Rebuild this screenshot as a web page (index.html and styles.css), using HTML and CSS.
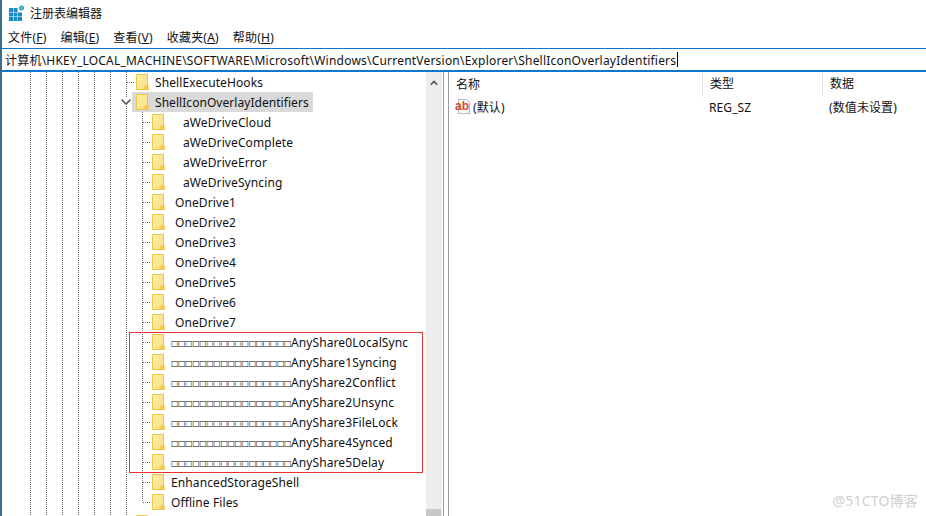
FILE: index.html
```html
<!DOCTYPE html>
<html lang="zh-CN">
<head>
    <meta charset="UTF-8">
    <title>注册表编辑器</title>
    <link rel="stylesheet" href="styles.css">
</head>
<body>

<svg class="defs" width="0" height="0">
    <defs>
        <linearGradient id="folderFill" x1="0" y1="0" x2="1" y2="1">
            <stop offset="0" stop-color="#fff0b0"/>
            <stop offset="1" stop-color="#fbdc7c"/>
        </linearGradient>
        <symbol id="folder" viewBox="0 0 13 16">
            <path d="M.5.5h11v11.5h-2.500v3.500H.5z" fill="url(#folderFill)" stroke="#ebc547"/>
            <path d="M9.500 12.500h3v3h-3z" fill="#f6d565" stroke="#ebc547"/>
        </symbol>
    </defs>
</svg>

<div class="window">
    <header class="titlebar">
        <svg class="appicon" width="16" height="16" viewBox="0 0 16 16">
            <path d="M0 3h4v4H0zM4.500 3h4v4h-4zM0 7.500h4v4H0zM4.500 7.500h4v4h-4zM9 7.500h4v4H9zM0 12h4v4H0zM4.500 12h4v4h-4zM9 12h4v4H9z" fill="#1b8cc8"/>
            <circle cx="12.500" cy="3" r="2.500" fill="#2f9fd4"/>
            <circle cx="12.500" cy="3" r="0.800" fill="#bfe3f4"/>
        </svg>
        <span>注册表编辑器</span>
    </header>

    <nav class="menubar">
        <span>文件(<u>F</u>)</span>
        <span>编辑(<u>E</u>)</span>
        <span>查看(<u>V</u>)</span>
        <span>收藏夹(<u>A</u>)</span>
        <span>帮助(<u>H</u>)</span>
    </nav>

    <div class="address"><span>计算机\HKEY_LOCAL_MACHINE\SOFTWARE\Microsoft\Windows\CurrentVersion\Explorer\ShellIconOverlayIdentifiers</span><i class="caret"></i></div>

    <main class="panes">
        <section class="tree">
            <div class="row level1">
                <i class="stub"></i>
                <div class="node"><svg class="folder"><use href="#folder"/></svg><span class="label">ShellExecuteHooks</span></div>
            </div>
            <div class="row open">
                <svg class="chevron" width="12" height="8" viewBox="0 0 12 8"><path d="M1.500 1.500 6 6l4.500-4.500" fill="none" stroke="#555" stroke-width="1.600"/></svg>
                <div class="node selected"><svg class="folder"><use href="#folder"/></svg><span class="label">ShellIconOverlayIdentifiers</span></div>
            </div>

            <div class="subkeys">
                <div class="row level2"><i class="stub"></i><div class="node"><svg class="folder"><use href="#folder"/></svg><span class="label wide">aWeDriveCloud</span></div></div>
                <div class="row level2"><i class="stub"></i><div class="node"><svg class="folder"><use href="#folder"/></svg><span class="label wide">aWeDriveComplete</span></div></div>
                <div class="row level2"><i class="stub"></i><div class="node"><svg class="folder"><use href="#folder"/></svg><span class="label wide">aWeDriveError</span></div></div>
                <div class="row level2"><i class="stub"></i><div class="node"><svg class="folder"><use href="#folder"/></svg><span class="label wide">aWeDriveSyncing</span></div></div>
                <div class="row level2"><i class="stub"></i><div class="node"><svg class="folder"><use href="#folder"/></svg><span class="label mid">OneDrive1</span></div></div>
                <div class="row level2"><i class="stub"></i><div class="node"><svg class="folder"><use href="#folder"/></svg><span class="label mid">OneDrive2</span></div></div>
                <div class="row level2"><i class="stub"></i><div class="node"><svg class="folder"><use href="#folder"/></svg><span class="label mid">OneDrive3</span></div></div>
                <div class="row level2"><i class="stub"></i><div class="node"><svg class="folder"><use href="#folder"/></svg><span class="label mid">OneDrive4</span></div></div>
                <div class="row level2"><i class="stub"></i><div class="node"><svg class="folder"><use href="#folder"/></svg><span class="label mid">OneDrive5</span></div></div>
                <div class="row level2"><i class="stub"></i><div class="node"><svg class="folder"><use href="#folder"/></svg><span class="label mid">OneDrive6</span></div></div>
                <div class="row level2"><i class="stub"></i><div class="node"><svg class="folder"><use href="#folder"/></svg><span class="label mid">OneDrive7</span></div></div>
                <div class="row level2"><i class="stub"></i><div class="node"><svg class="folder"><use href="#folder"/></svg><span class="label"><span class="tofu">□□□□□□□□□□□□□□□□□</span>AnyShare0LocalSync</span></div></div>
                <div class="row level2"><i class="stub"></i><div class="node"><svg class="folder"><use href="#folder"/></svg><span class="label"><span class="tofu">□□□□□□□□□□□□□□□□□</span>AnyShare1Syncing</span></div></div>
                <div class="row level2"><i class="stub"></i><div class="node"><svg class="folder"><use href="#folder"/></svg><span class="label"><span class="tofu">□□□□□□□□□□□□□□□□□</span>AnyShare2Conflict</span></div></div>
                <div class="row level2"><i class="stub"></i><div class="node"><svg class="folder"><use href="#folder"/></svg><span class="label"><span class="tofu">□□□□□□□□□□□□□□□□□</span>AnyShare2Unsync</span></div></div>
                <div class="row level2"><i class="stub"></i><div class="node"><svg class="folder"><use href="#folder"/></svg><span class="label"><span class="tofu">□□□□□□□□□□□□□□□□□</span>AnyShare3FileLock</span></div></div>
                <div class="row level2"><i class="stub"></i><div class="node"><svg class="folder"><use href="#folder"/></svg><span class="label"><span class="tofu">□□□□□□□□□□□□□□□□□</span>AnyShare4Synced</span></div></div>
                <div class="row level2"><i class="stub"></i><div class="node"><svg class="folder"><use href="#folder"/></svg><span class="label"><span class="tofu">□□□□□□□□□□□□□□□□□</span>AnyShare5Delay</span></div></div>
                <div class="row level2"><i class="stub"></i><div class="node"><svg class="folder"><use href="#folder"/></svg><span class="label">EnhancedStorageShell</span></div></div>
                <div class="row level2"><i class="stub"></i><div class="node"><svg class="folder"><use href="#folder"/></svg><span class="label">Offline Files</span></div></div>
            </div>

            <div class="row level1">
                <div class="node next"><svg class="folder"><use href="#folder"/></svg></div>
            </div>

            <div class="redbox"></div>
        </section>

        <div class="scrollbar">
            <svg width="8" height="6" viewBox="0 0 8 6"><path d="M.8 4.800 4 1.500l3.200 3.300" fill="none" stroke="#555" stroke-width="1.600"/></svg>
            <div class="thumb"></div>
        </div>

        <div class="splitter"></div>

        <section class="list">
            <div class="list-head">
                <div class="col col-name">名称</div>
                <div class="col col-type">类型</div>
                <div class="col col-data">数据</div>
            </div>
            <div class="list-row">
                <div class="col col-name">
                    <svg class="abicon" width="16" height="16" viewBox="0 0 16 16">
                        <path d="M3.500 .5h8l3 3v11.500l-3-1-3 1-3-1-2 1z" fill="#fff" stroke="#b5b5b5"/>
                        <text x="0" y="11" class="abtext">ab</text>
                    </svg>
                    <span>(默认)</span>
                </div>
                <div class="col col-type">REG_SZ</div>
                <div class="col col-data">(数值未设置)</div>
            </div>
        </section>
    </main>

    <div class="watermark">@51CTO博客</div>
</div>

</body>
</html>
```

FILE: styles.css
```css
html, body {
    margin: 0;
    height: 100%;
}
body {
    font-family: "Noto Sans", "Noto Sans CJK SC", sans-serif;
    font-size: 12px;
    color: #111;
    background: #fff;
    overflow: hidden;
}
.defs {
    display: block;
}
.window {
    position: relative;
    height: 516px;
    display: flex;
    flex-direction: column;
    border-left: 2px solid #3b6d8c;
    overflow: hidden;
}

.titlebar {
    height: 26px;
    display: flex;
    align-items: center;
    gap: 5px;
    padding-left: 7px;
}
.appicon {
    flex: none;
}

.menubar {
    height: 22px;
    display: flex;
    align-items: center;
    gap: 14px;
    padding-left: 6px;
    letter-spacing: 0.2px;
}

.address {
    height: 21px;
    display: flex;
    align-items: center;
    padding-left: 3px;
    border-top: 1px solid #0a78d0;
    border-bottom: 2px solid #0a78d0;
    white-space: nowrap;
    letter-spacing: 0.21px;
}
.caret {
    width: 1px;
    height: 15px;
    background: #000;
    margin-left: 1px;
}

.panes {
    flex: 1;
    display: flex;
    min-height: 0;
}

.tree {
    position: relative;
    width: 424px;
    overflow: hidden;
    background-image:
        repeating-linear-gradient(to bottom, #666 0 1px, transparent 1px 2px),
        repeating-linear-gradient(to bottom, #666 0 1px, transparent 1px 2px),
        repeating-linear-gradient(to bottom, #666 0 1px, transparent 1px 2px),
        repeating-linear-gradient(to bottom, #666 0 1px, transparent 1px 2px),
        repeating-linear-gradient(to bottom, #666 0 1px, transparent 1px 2px),
        repeating-linear-gradient(to bottom, #666 0 1px, transparent 1px 2px),
        repeating-linear-gradient(to bottom, #666 0 1px, transparent 1px 2px);
    background-size: 1px 100%;
    background-repeat: no-repeat;
    background-position: 28px 0, 44px 0, 60px 0, 76px 0, 92px 0, 108px 0, 124px 0;
}
.row {
    height: 20px;
    display: flex;
    align-items: center;
    white-space: nowrap;
}
.level1 {
    padding-left: 125px;
}
.open {
    padding-left: 118px;
}
.chevron {
    flex: none;
    width: 12px;
    background: #fff;
}
.subkeys {
    padding-left: 141px;
    background-image: repeating-linear-gradient(to bottom, #666 0 1px, transparent 1px 2px);
    background-size: 1px calc(100% - 10px);
    background-repeat: no-repeat;
    background-position: 140px 0;
}
.stub {
    flex: none;
    width: 7px;
    height: 1px;
    background-image: repeating-linear-gradient(to right, #666 0 1px, transparent 1px 2px);
}
.node {
    height: 20px;
    box-sizing: border-box;
    display: flex;
    align-items: center;
    padding: 0 4px 0 2px;
}
.open .node {
    padding-left: 4px;
}
.selected {
    background: #d9d9d9;
}
.selected .label {
    letter-spacing: 0.05px;
}
.next {
    margin-left: 7px;
    padding-top: 3px;
    align-items: flex-start;
}
.folder {
    flex: none;
    width: 13px;
    height: 16px;
}
.label {
    margin-left: 6px;
    letter-spacing: 0.1px;
}
.label.mid {
    margin-left: 10px;
}
.label.wide {
    margin-left: 18px;
}
.tofu {
    font-family: "DejaVu Sans", sans-serif;
    font-size: 8px;
    letter-spacing: -0.5px;
    vertical-align: 1px;
    color: #000;
}
.redbox {
    position: absolute;
    left: 127px;
    top: 260px;
    width: 292px;
    height: 139px;
    border: 1px solid #e8302e;
}

.scrollbar {
    position: relative;
    width: 16px;
    display: flex;
    justify-content: center;
    padding-top: 8px;
    box-sizing: border-box;
    background: #eee;
}
.scrollbar svg {
    display: block;
}
.thumb {
    position: absolute;
    left: 0;
    right: 1px;
    bottom: 0;
    height: 7px;
    background: #c8c8c8;
}

.splitter {
    width: 4px;
    margin-left: 1px;
    border-left: 1px solid #9a9a9a;
    border-right: 1px solid #9a9a9a;
}

.list {
    flex: 1;
}
.list-head {
    height: 25px;
    display: flex;
    align-items: center;
}
.list-head .col-type,
.list-head .col-data {
    border-left: 1px solid #e5e5e5;
}
.list-head .col {
    height: 25px;
    line-height: 24px;
}
.list-row {
    display: flex;
    align-items: center;
    height: 20px;
    letter-spacing: 0.1px;
}
.list-row .col-name {
    padding-left: 6px;
    gap: 2px;
}
.col {
    box-sizing: border-box;
    white-space: nowrap;
}
.col-name {
    width: 253px;
    padding-left: 7px;
    display: flex;
    align-items: center;
    gap: 1px;
}
.col-type {
    width: 120px;
    padding-left: 7px;
}
.col-data {
    flex: 1;
    padding-left: 7px;
}
.abicon {
    flex: none;
}
.abtext {
    font-family: "Liberation Sans", sans-serif;
    font-size: 12px;
    font-weight: bold;
    fill: #d9482b;
}

.watermark {
    position: absolute;
    right: 8px;
    bottom: 6px;
    font-size: 14px;
    letter-spacing: 0.2px;
    color: #cfcfcf;
}
```
